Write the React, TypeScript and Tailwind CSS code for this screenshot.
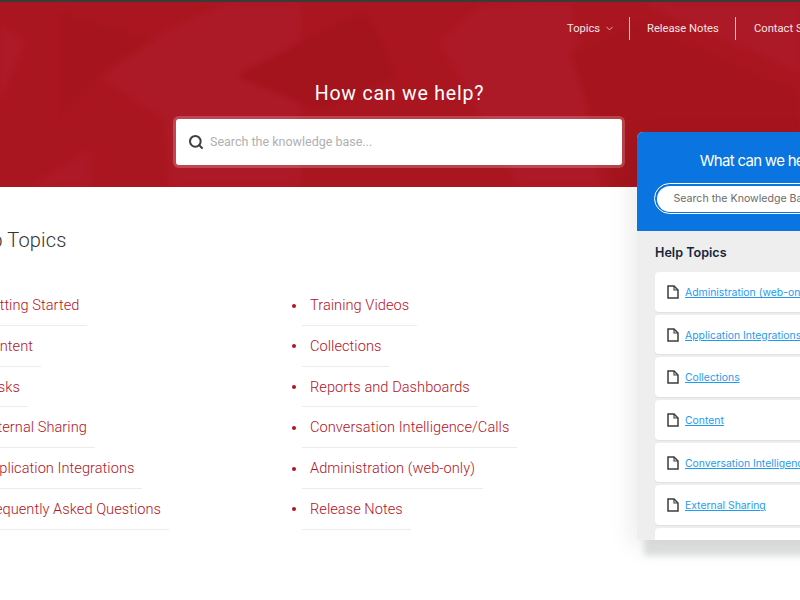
import { ChevronDown, Search } from "lucide-react";

const COL_A = [
  "Getting Started",
  "Content",
  "Tasks",
  "External Sharing",
  "Application Integrations",
  "Frequently Asked Questions",
];

const COL_B = [
  "Training Videos",
  "Collections",
  "Reports and Dashboards",
  "Conversation Intelligence/Calls",
  "Administration (web-only)",
  "Release Notes",
];

const WIDGET_TOPICS = [
  "Administration (web-only)",
  "Application Integrations",
  "Collections",
  "Content",
  "Conversation Intelligence/Calls",
  "External Sharing",
  "Frequently Asked Questions",
];

function HeroPattern() {
  return (
    <svg className="absolute inset-0 h-full w-full blur-[3px]" viewBox="0 0 800 187" preserveAspectRatio="none">
      <polygon points="0,25 25,40 0,100" fill="#ae1a28" />
      <polygon points="100,75 165,30 230,0 300,0 300,187 170,187 165,118" fill="#ad1a27" />
      <polygon points="60,10 155,38 100,75 60,120" fill="#a6151d" />
      <polygon points="235,75 310,35 365,10 380,35 395,75 320,110" fill="#a4141d" />
      <polygon points="440,40 480,5 570,0 600,187 520,187" fill="#ad1a27" />
      <polygon points="570,50 640,20 800,90 800,130 700,187 610,187" fill="#a6151e" />
      <polygon points="640,0 800,0 800,70" fill="#ad1a27" />
      <polygon points="30,187 90,150 90,187" fill="#ad1a27" />
    </svg>
  );
}

function TopicColumn({ items, offset }: { items: string[]; offset: string }) {
  return (
    <ul className={`flex shrink-0 flex-col ${offset}`}>
      {items.map((t) => (
        <li key={t} className="flex h-[40.8px] items-start">
          <span className="mt-[18.5px] mr-[6px] h-1 w-1 shrink-0 rounded-full bg-[#b5121f]" />
          <span className="block h-[40.8px] border-b border-[#ececec] px-2 pt-[9px] text-[14.6px] leading-[22px] font-light tracking-[0.05px] whitespace-nowrap text-[#b3121f]">
            {t}
          </span>
        </li>
      ))}
    </ul>
  );
}

function HelpWidget() {
  return (
    <aside className="absolute top-[132px] left-[637px] w-[248px] font-['Inter',sans-serif]">
      <div className="absolute top-[16px] left-[7px] h-[408px] w-full bg-[#e2e3e3] blur-[3px]" />
      <div className="relative h-[408px] overflow-hidden rounded-t-md bg-[#eeeeee] shadow-[-6px_6px_24px_rgba(0,0,0,0.08)]">
        <div className="flex h-[99px] flex-col items-center bg-[#0a74e0] px-[17px] pt-[19px]">
          <h2 className="text-[15px] leading-5 tracking-[-0.7px] whitespace-nowrap text-white">What can we help?</h2>
          <div className="mt-[12px] h-[31px] w-full rounded-full border border-white bg-[#0a74e0] p-[1.5px]">
            <div className="h-full rounded-full bg-white pl-[17px] text-[10.6px] leading-[26px] whitespace-nowrap text-[#6b6b6b]">
              Search the Knowledge Base
            </div>
          </div>
        </div>
        <div className="px-[18px] pt-[14px]">
          <h3 className="text-[12.6px] leading-4 font-semibold text-[#14263a]">Help Topics</h3>
          <ul className="mt-[11px] flex flex-col gap-[3px]">
            {WIDGET_TOPICS.map((t) => (
              <li key={t} className="flex h-[39.7px] items-center gap-[6px] rounded-sm bg-white pl-[12px] shadow-[0_1px_1px_rgba(0,0,0,0.06)]">
                <svg width="12" height="14" viewBox="0 0 12 14" fill="none" stroke="#3c3c3c" strokeWidth="1.5" className="shrink-0">
                  <path d="M1 1h6l4 4v8H1z" />
                  <path d="M7 1v4h4" strokeWidth="1.1" />
                </svg>
                <a className="pt-[2px] text-[10.4px] whitespace-nowrap text-[#1f9bf0] underline">{t}</a>
              </li>
            ))}
          </ul>
        </div>
      </div>
    </aside>
  );
}

export default function App() {
  return (
    <div className="relative h-[600px] w-[800px] overflow-hidden bg-white font-['Roboto',sans-serif]">
      <header className="relative h-[187px] overflow-hidden border-t-2 border-[#3a3a3a] bg-[#aa1620]">
        <HeroPattern />
        <div className="relative flex flex-col items-center">
          <nav className="mt-[15px] flex h-[23px] w-full items-center pl-[567px] text-[11.2px] whitespace-nowrap text-[#f6e3e5]">
            <span className="flex w-[63px] shrink-0 items-center gap-[4px] border-r border-[#e8c4c8]">
              <span className="leading-[23px]">Topics</span>
              <ChevronDown size={11} strokeWidth={1.6} />
            </span>
            <span className="w-[106px] shrink-0 border-r border-[#e8c4c8] pl-[17px] leading-[23px]">Release Notes</span>
            <span className="shrink-0 pl-[18px] leading-[23px]">Contact Support</span>
          </nav>
          <h1 className="mt-[42px] mr-[1px] text-[19.5px] leading-6 tracking-[0.8px] text-white">How can we help?</h1>
          <div className="mt-[13px] mr-[2px] flex h-[46px] w-[446px] items-center gap-[6px] rounded-[3px] bg-white pl-[12px] shadow-[0_0_0_3px_rgba(255,255,255,0.2)]">
            <Search size={16} strokeWidth={3} className="text-[#3f3f3f]" />
            <span className="text-[12.5px] text-[#b0b0b0]">Search the knowledge base...</span>
          </div>
        </div>
      </header>
      <main>
        <h2 className="mt-[41px] ml-[-38px] text-[20px] leading-6 font-light tracking-[0.15px] whitespace-nowrap text-[#333333]">Help Topics</h2>
        <div className="mt-[33px] flex">
          <TopicColumn items={COL_A} offset="ml-[-36px] w-[328px]" />
          <TopicColumn items={COL_B} offset="" />
        </div>
      </main>
      <HelpWidget />
    </div>
  );
}
